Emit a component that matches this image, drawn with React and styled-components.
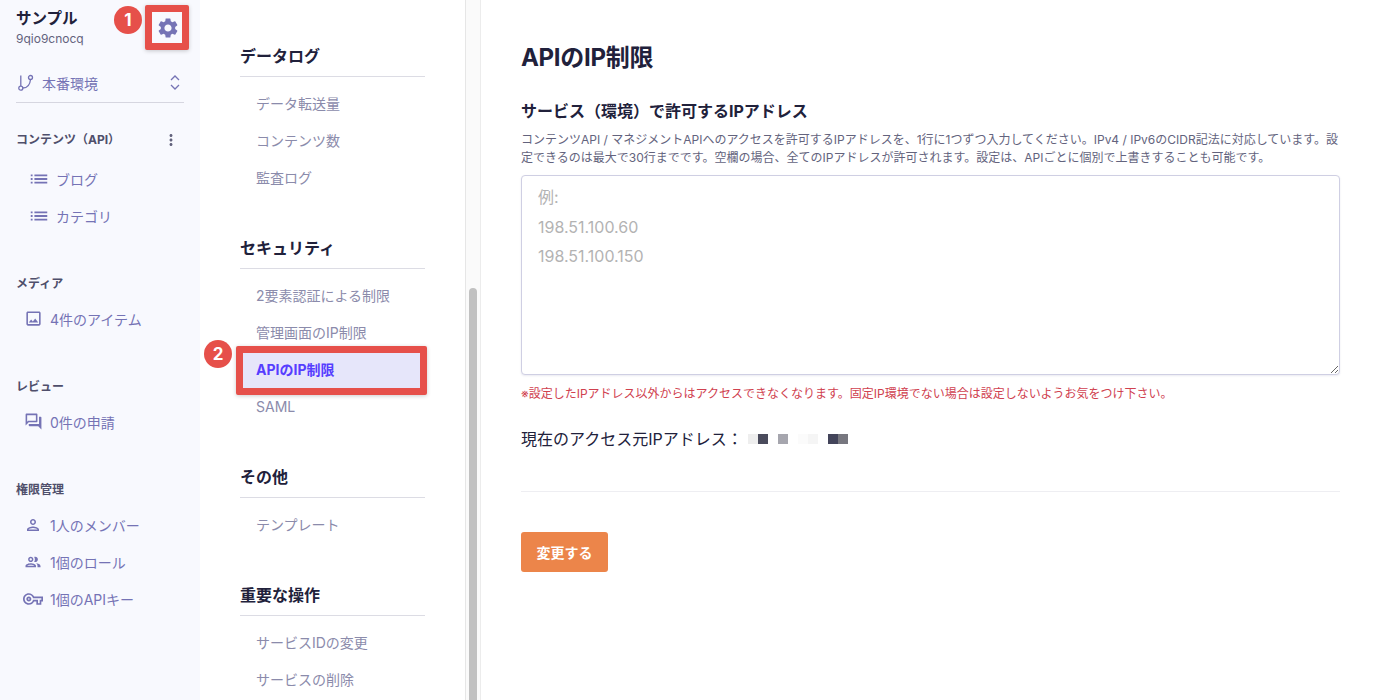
import React from "react";
import styled, { createGlobalStyle } from "styled-components";
import {
  MdSettings, MdMoreVert, MdList, MdOutlineImage, MdOutlineForum,
  MdOutlinePerson, MdOutlinePeople, MdOutlineVpnKey,
} from "react-icons/md";

const Global = createGlobalStyle`
  html, body { margin: 0; padding: 0; height: 100%; overflow: hidden; background: #fff; }
  * { box-sizing: border-box; }
  body { font-family: Inter, "Noto Sans CJK JP", sans-serif; color: #21213b; }
`;

const Page = styled.div`
  display: flex;
  width: 1379px;
  height: 700px;
  overflow: hidden;
`;

const Sidebar = styled.aside`
  position: relative;
  width: 200px;
  flex: none;
  background: #f8f9fe;
  padding: 10px 16px 0;
`;

const ServiceName = styled.div`
  font-size: 15.5px;
  font-weight: 700;
  line-height: 18px;
  color: #21213b;
`;

const ServiceId = styled.div`
  font-size: 12px;
  line-height: 16px;
  margin-top: 3px;
  color: #63637d;
`;

const SettingsBox = styled.div`
  position: absolute;
  left: 145px;
  top: 5px;
  width: 44px;
  height: 45px;
  padding-left: 1px;
  border: 7px solid #e6504a;
  border-radius: 2px;
  background: #f8f9fe;
  box-shadow: 0 1px 4px rgba(0, 0, 0, 0.2);
  display: flex;
  align-items: center;
  justify-content: center;
  color: #7573b5;
  font-size: 24px;
`;

const Badge = styled.div`
  position: absolute;
  left: ${(p) => p.$x}px;
  top: ${(p) => p.$y}px;
  width: 28px;
  height: 28px;
  border-radius: 50%;
  background: #e6504a;
  color: #fff;
  font-size: 17px;
  font-weight: 700;
  line-height: 1;
  display: flex;
  align-items: center;
  justify-content: center;
  font-family: Inter, sans-serif;
`;

const EnvRow = styled.div`
  display: flex;
  align-items: center;
  margin-top: 20px;
  height: 36px;
  border-bottom: 1px solid #d6d6e0;
  color: #7573b5;
  padding: 0 4px 4px 2px;
  font-size: 14px;
`;

const EnvLabel = styled.span`
  margin-left: 8px;
  flex: 1;
`;

const SectionHead = styled.div`
  display: flex;
  align-items: center;
  justify-content: space-between;
  font-size: 12px;
  font-weight: 700;
  line-height: 16px;
  color: #4f4f6b;
  margin-top: ${(p) => p.$top}px;
  padding-right: 4px;
  svg { margin: -1px 0; color: #63637d; }
`;

const SideList = styled.div`
  display: flex;
  flex-direction: column;
  margin-top: ${(p) => p.$top}px;
`;

const SideItem = styled.div`
  display: flex;
  align-items: center;
  height: 37px;
  padding-left: ${(p) => p.$indent}px;
  gap: ${(p) => p.$gap}px;
  font-size: 14px;
  color: #7573b5;
  svg { flex: none; }
`;

const Middle = styled.nav`
  position: relative;
  width: 281px;
  flex: none;
  display: flex;
  height: 700px;
`;

const MiddleBody = styled.div`
  position: relative;
  width: 265px;
  padding: 43px 40px 0;
  overflow: hidden;
`;

const Track = styled.div`
  width: 16px;
  background: #fafafa;
  border-left: 1px solid #e6e6e6;
  border-right: 1px solid #ececec;
  padding-top: 288px;
  display: flex;
  justify-content: center;
`;

const Thumb = styled.div`
  width: 8px;
  height: 420px;
  border-radius: 4px;
  background: #c1c1c1;
`;

const GroupTitle = styled.div`
  font-size: 16px;
  font-weight: 700;
  line-height: 24px;
  color: #21213b;
  padding: 1px 0 8px;
  border-bottom: 1px solid #dcdce4;
  margin-top: ${(p) => p.$top}px;
`;

const GroupList = styled.div`
  display: flex;
  flex-direction: column;
  margin-top: 8px;
`;

const GroupItem = styled.div`
  position: relative;
  height: 37px;
  line-height: 37px;
  padding-left: 16px;
  font-size: 14px;
  font-weight: ${(p) => (p.$active ? 700 : 400)};
  color: ${(p) => (p.$active ? "#563eff" : "#8b8bab")};
  z-index: ${(p) => (p.$active ? 1 : 0)};
`;

const ActiveBox = styled.div`
  position: absolute;
  left: -4px;
  right: -2px;
  top: -5px;
  bottom: -7px;
  border: 7px solid #e6504a;
  border-radius: 2px;
  background: #e6e6fa;
  box-shadow: 0 1px 4px rgba(0, 0, 0, 0.2);
  z-index: -1;
`;

const Main = styled.main`
  flex: 1;
  padding: 42px 39px 0 40px;
  min-width: 0;
`;

const Title = styled.h1`
  margin: 0;
  font-size: 24px;
  font-weight: 700;
  line-height: 32px;
  letter-spacing: -0.3px;
  color: #21213b;
`;

const FieldTitle = styled.h2`
  margin: 25px 0 0;
  font-size: 16px;
  font-weight: 700;
  line-height: 24px;
  color: #21213b;
`;

const Desc = styled.p`
  margin: 8px 0 0;
  font-size: 12px;
  line-height: 18px;
  color: #63637d;
`;

const Area = styled.textarea`
  display: block;
  width: 100%;
  height: 200px;
  margin-top: 8px;
  padding: 7px 16px;
  font-family: inherit;
  font-size: 16px;
  line-height: 29.5px;
  border: 1px solid #cfcfe3;
  border-radius: 4px;
  background: #fff;
  box-shadow: 0 1px 2px rgba(80, 80, 140, 0.12);
  outline: none;
  &::placeholder { color: #b3b3b3; opacity: 1; }
`;

const Note = styled.p`
  margin: 10px 0 0;
  font-size: 12px;
  line-height: 18px;
  color: #d0414f;
`;

const IpRow = styled.div`
  display: flex;
  align-items: center;
  margin-top: 23px;
  height: 24px;
  font-size: 16px;
  color: #21213b;
`;

const Mosaic = styled.span`
  display: flex;
  margin-left: 5px;
  margin-top: 1px;
`;

const Pixel = styled.i`
  display: block;
  width: 10px;
  height: 10px;
  background: ${(p) => p.$c};
`;

const Divider = styled.hr`
  margin: 41px 0 0;
  border: 0;
  border-top: 1px solid #eeeef2;
`;

const Submit = styled.button`
  display: block;
  margin-top: 40px;
  width: 87px;
  height: 40px;
  padding: 0 0 1px;
  border: 0;
  border-radius: 3px;
  background: #ec854a;
  color: #fff;
  font-family: inherit;
  font-size: 14px;
  font-weight: 700;
`;

const BranchIcon = () => (
  <svg width="16" height="18" viewBox="0 0 16 18" fill="none" stroke="currentColor" strokeWidth="1.3">
    <circle cx="2.8" cy="14.2" r="2" />
    <circle cx="12.5" cy="3.5" r="2" />
    <path d="M2.8 12V1.5M4.8 14c4.5 0 7.2-3 7.7-8.5" />
  </svg>
);

const UpDownIcon = () => (
  <svg width="10" height="15" viewBox="0 0 10 15" fill="none" stroke="currentColor" strokeWidth="1.3">
    <path d="M1 5l4-4 4 4M1 10l4 4 4-4" />
  </svg>
);

const pixels = ["#eeeeee", "#4a4b5c", "#ffffff", "#a6a6ae", "#ffffff", "#fbfbfb", "#f5f5f5", "#ffffff", "#43445a", "#77777f"];

const groups = [
  { title: "データログ", top: 0, items: ["データ転送量", "コンテンツ数", "監査ログ"] },
  { title: "セキュリティ", top: 39, items: ["2要素認証による制限", "管理画面のIP制限", "APIのIP制限", "SAML"] },
  { title: "その他", top: 39, items: ["テンプレート"] },
  { title: "重要な操作", top: 39, items: ["サービスIDの変更", "サービスの削除"] },
];

export default function App() {
  return (
    <Page>
      <Global />
      <Sidebar>
        <ServiceName>サンプル</ServiceName>
        <ServiceId>9qio9cnocq</ServiceId>
        <SettingsBox><MdSettings /></SettingsBox>
        <Badge $x={114} $y={6}>1</Badge>
        <EnvRow>
          <BranchIcon />
          <EnvLabel>本番環境</EnvLabel>
          <UpDownIcon />
        </EnvRow>
        <SectionHead $top={29}>コンテンツ（API）<MdMoreVert size={18} /></SectionHead>
        <SideList $top={12}>
          <SideItem $indent={12} $gap={6}><MdList size={22} />ブログ</SideItem>
          <SideItem $indent={12} $gap={6}><MdList size={22} />カテゴリ</SideItem>
        </SideList>
        <SectionHead $top={42}>メディア</SectionHead>
        <SideList $top={8}>
          <SideItem $indent={8} $gap={7}><MdOutlineImage size={19} />4件のアイテム</SideItem>
        </SideList>
        <SectionHead $top={42}>レビュー</SectionHead>
        <SideList $top={8}>
          <SideItem $indent={8} $gap={7}><MdOutlineForum size={19} />0件の申請</SideItem>
        </SideList>
        <SectionHead $top={42}>権限管理</SectionHead>
        <SideList $top={8}>
          <SideItem $indent={8} $gap={8}><MdOutlinePerson size={18} />1人のメンバー</SideItem>
          <SideItem $indent={8} $gap={8}><MdOutlinePeople size={18} />1個のロール</SideItem>
          <SideItem $indent={7} $gap={7}><MdOutlineVpnKey size={20} />1個のAPIキー</SideItem>
        </SideList>
      </Sidebar>
      <Middle>
        <MiddleBody>
          {groups.map((g) => (
            <div key={g.title}>
              <GroupTitle $top={g.top}>{g.title}</GroupTitle>
              <GroupList>
                {g.items.map((it) => {
                  const active = it === "APIのIP制限";
                  return (
                    <GroupItem key={it} $active={active}>
                      {active && <ActiveBox />}
                      {it}
                      {active && <Badge $x={-36} $y={-11}>2</Badge>}
                    </GroupItem>
                  );
                })}
              </GroupList>
            </div>
          ))}
        </MiddleBody>
        <Track><Thumb /></Track>
      </Middle>
      <Main>
        <Title>APIのIP制限</Title>
        <FieldTitle>サービス（環境）で許可するIPアドレス</FieldTitle>
        <Desc>コンテンツAPI / マネジメントAPIへのアクセスを許可するIPアドレスを、1行に1つずつ入力してください。IPv4 / IPv6のCIDR記法に対応しています。設定できるのは最大で30行までです。空欄の場合、全てのIPアドレスが許可されます。設定は、APIごとに個別で上書きすることも可能です。</Desc>
        <Area placeholder={"例:\n198.51.100.60\n198.51.100.150"} />
        <Note>※設定したIPアドレス以外からはアクセスできなくなります。固定IP環境でない場合は設定しないようお気をつけ下さい。</Note>
        <IpRow>
          現在のアクセス元IPアドレス：
          <Mosaic>
            {pixels.map((c, i) => <Pixel key={i} $c={c} />)}
          </Mosaic>
        </IpRow>
        <Divider />
        <Submit>変更する</Submit>
      </Main>
    </Page>
  );
}
